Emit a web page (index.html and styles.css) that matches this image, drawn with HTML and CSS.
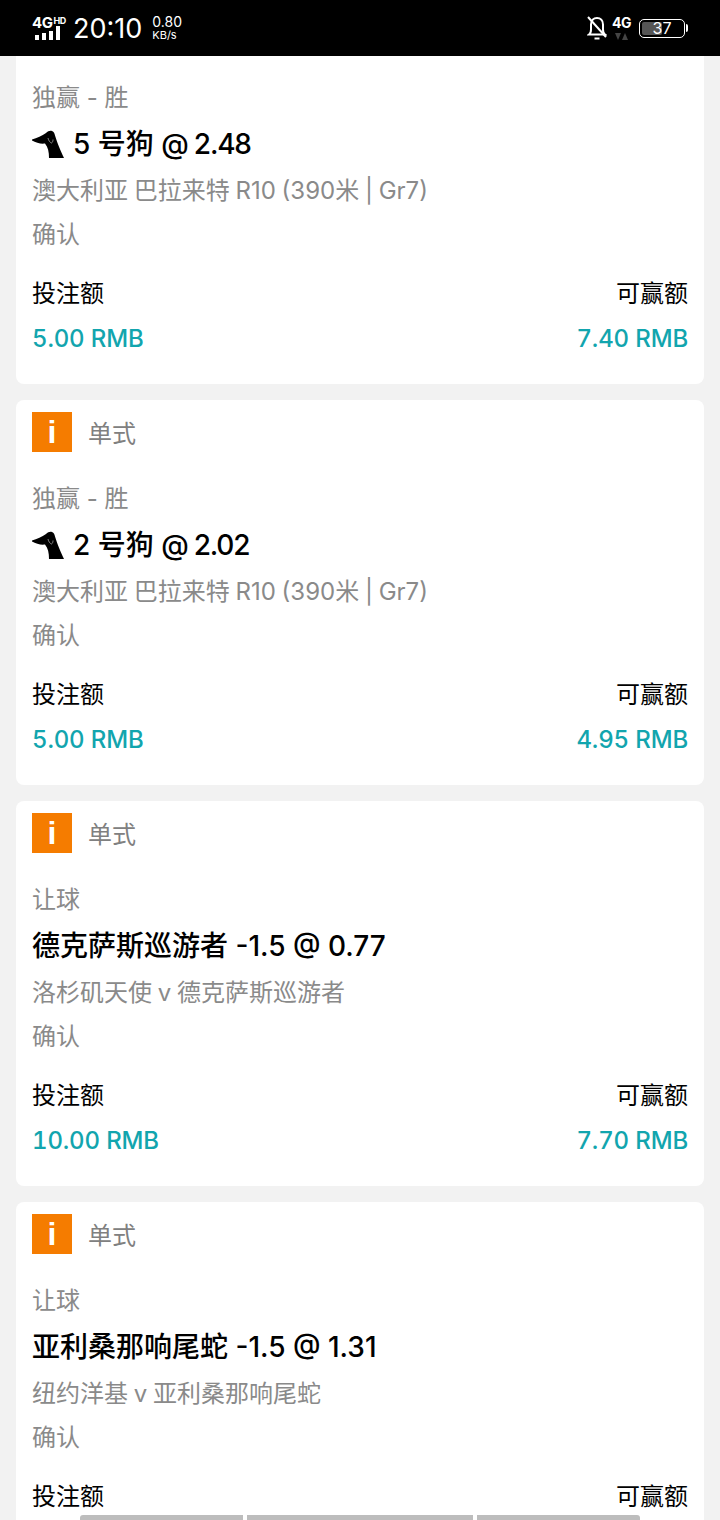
FILE: index.html
```html
<!DOCTYPE html>
<html lang="zh-CN">
<head>
  <meta charset="UTF-8" />
  <title>单式</title>
  <link rel="stylesheet" href="styles.css">
</head>
<body>

  <header class="status-bar">
    <div class="status-left">
      <div class="signal">
        <div class="signal-text">4G<sup>HD</sup></div>
        <div class="signal-bars"><i class="b1"></i><i class="b2"></i><i class="b3"></i><i class="b4"></i></div>
      </div>
      <span class="clock">20:10</span>
      <div class="speed"><span>0.80</span><span class="speed-unit">KB/s</span></div>
    </div>
    <div class="status-right">
      <svg class="bell" width="20" height="24" viewBox="0 0 20 24" fill="none" stroke="#fff" stroke-width="2">
        <path d="M2 18.500c1.500-1 2-2.500 2-5V8.500C4 4.500 6.500 2 10 2s6 2.500 6 6.500v5c0 2.500.5 4 2 5z" />
        <path d="M7.500 22.500h5" />
        <path d="M1 1l18 20" />
      </svg>
      <div class="net">
        <span class="net-text">4G</span>
        <span class="net-arrows"><i class="down"></i><i class="up"></i></span>
      </div>
      <div class="battery">
        <div class="battery-body"><div class="battery-fill"></div><span class="battery-num">37</span></div>
        <div class="battery-cap"></div>
      </div>
    </div>
  </header>

  <main class="list">

    <section class="card card-cut">
      <p class="market">独赢 - 胜</p>
      <h2 class="pick"><svg class="dog" viewBox="0 0 32 28"><use href="#dog-shape" /></svg><span>5 号狗 <span class="odds">@ 2.48</span></span></h2>
      <p class="event">澳大利亚 巴拉来特 R10 (390米 | Gr7)</p>
      <p class="state">确认</p>
      <div class="money">
        <div class="money-col"><span class="money-label">投注额</span><span class="money-value">5.00 RMB</span></div>
        <div class="money-col right"><span class="money-label">可赢额</span><span class="money-value">7.40 RMB</span></div>
      </div>
    </section>

    <section class="card">
      <div class="card-head"><span class="info-badge">i</span><span class="bet-type">单式</span></div>
      <p class="market">独赢 - 胜</p>
      <h2 class="pick"><svg class="dog" viewBox="0 0 32 28"><use href="#dog-shape" /></svg><span>2 号狗 <span class="odds">@ 2.02</span></span></h2>
      <p class="event">澳大利亚 巴拉来特 R10 (390米 | Gr7)</p>
      <p class="state">确认</p>
      <div class="money">
        <div class="money-col"><span class="money-label">投注额</span><span class="money-value">5.00 RMB</span></div>
        <div class="money-col right"><span class="money-label">可赢额</span><span class="money-value">4.95 RMB</span></div>
      </div>
    </section>

    <section class="card">
      <div class="card-head"><span class="info-badge">i</span><span class="bet-type">单式</span></div>
      <p class="market">让球</p>
      <h2 class="pick">德克萨斯巡游者 -1.5 @ 0.77</h2>
      <p class="event">洛杉矶天使 v 德克萨斯巡游者</p>
      <p class="state">确认</p>
      <div class="money">
        <div class="money-col"><span class="money-label">投注额</span><span class="money-value">10.00 RMB</span></div>
        <div class="money-col right"><span class="money-label">可赢额</span><span class="money-value">7.70 RMB</span></div>
      </div>
    </section>

    <section class="card">
      <div class="card-head"><span class="info-badge">i</span><span class="bet-type">单式</span></div>
      <p class="market">让球</p>
      <h2 class="pick">亚利桑那响尾蛇 -1.5 @ 1.31</h2>
      <p class="event">纽约洋基 v 亚利桑那响尾蛇</p>
      <p class="state">确认</p>
      <div class="money">
        <div class="money-col"><span class="money-label">投注额</span></div>
        <div class="money-col right"><span class="money-label">可赢额</span></div>
      </div>
    </section>

  </main>

  <div class="home-bar"><i class="seg1"></i><i class="seg2"></i><i class="seg3"></i></div>

  <svg width="0" height="0" class="defs">
    <symbol id="dog-shape" viewBox="0 0 32 28">
      <path fill="#000" d="M0 9.500C5 8 10 6 14 3c2-2 4-2.500 6-2 2 .5 2.500 2.500 3 4.500C25 12 29 22 32 28H17c0-6-1-11-4-14.500-4 .5-9-.5-13-3z" />
      <path fill="none" stroke="#bbb" stroke-width=".7" d="M16 8c.5 2.500 2 4.500 3.500 5 1-.5 1.500-2 1.500-3.500" />
    </symbol>
  </svg>

</body>
</html>
```

FILE: styles.css
```css
* {
  box-sizing: border-box;
}

html,
body {
  margin: 0;
  height: 1520px;
  overflow: hidden;
}

body {
  position: relative;
  font-family: Inter, "Noto Sans CJK SC", sans-serif;
  background-color: #f2f2f2;
  color: #000;
}

p,
h2 {
  margin: 0;
}

.defs {
  position: absolute;
}

/* status bar */
.status-bar {
  height: 56px;
  background-color: #000;
  color: #fff;
  display: flex;
  justify-content: space-between;
  align-items: center;
  padding: 0 32px;
}

.status-left,
.status-right {
  display: flex;
  align-items: center;
}

.signal {
  width: 34px;
  display: flex;
  flex-direction: column;
}

.signal-text {
  display: flex;
  font-size: 15px;
  font-weight: 700;
  line-height: 12px;
  letter-spacing: -0.5px;
  white-space: nowrap;
}

.signal-text sup {
  font-size: 9px;
  line-height: 8px;
  margin-left: 1px;
}

.signal-bars {
  display: flex;
  align-items: flex-end;
  gap: 3px;
  height: 14px;
  margin: -3px 0 0 3px;
}

.signal-bars i {
  display: block;
  width: 4px;
  background: #fff;
}

.b1 { height: 5px; }
.b2 { height: 7px; }
.b3 { height: 9px; }
.b4 { height: 14px; }

.clock {
  font-size: 27px;
  margin-left: 7px;
  white-space: nowrap;
}

.speed {
  display: flex;
  flex-direction: column;
  font-size: 14px;
  line-height: 14px;
  margin-left: 10px;
}

.speed-unit {
  font-size: 11px;
  line-height: 12px;
}

.bell {
  margin-right: 5px;
}

.net {
  display: flex;
  flex-direction: column;
  align-items: center;
  margin-right: 8px;
}

.net-text {
  font-size: 14px;
  font-weight: 700;
  line-height: 14px;
  letter-spacing: -0.5px;
}

.net-arrows {
  display: flex;
  gap: 1px;
  margin-top: 3px;
}

.net-arrows i {
  width: 0;
  height: 0;
  border-left: 3.500px solid transparent;
  border-right: 3.500px solid transparent;
}

.net-arrows .down {
  border-top: 7px solid #444;
}

.net-arrows .up {
  border-bottom: 7px solid #444;
}

.battery {
  display: flex;
  align-items: center;
}

.battery-body {
  position: relative;
  width: 46px;
  height: 19px;
  border: 1.500px solid #fff;
  border-radius: 5px;
  padding: 2px;
}

.battery-fill {
  width: 50%;
  height: 100%;
  background: #555;
  border-radius: 2px;
}

.battery-num {
  position: absolute;
  top: 0;
  left: 0;
  right: 0;
  text-align: center;
  font-size: 16px;
  line-height: 16px;
}

.battery-cap {
  width: 2px;
  height: 8px;
  background: #fff;
  margin-left: 1px;
  border-radius: 0 2px 2px 0;
}

/* bet cards */
.list {
  padding: 0 16px;
  display: flex;
  flex-direction: column;
  gap: 16px;
}

.card {
  background: white;
  border-radius: 8px;
  padding: 12px 16px 0;
  height: 385px;
  flex-shrink: 0;
}

.card-cut {
  height: 328px;
  padding-top: 20px;
  border-radius: 0 0 8px 8px;
}

.card-head {
  display: flex;
  align-items: center;
  height: 40px;
  margin-bottom: 25px;
}

.info-badge {
  width: 40px;
  height: 40px;
  background: #f57c00;
  color: #fff;
  font-family: "Liberation Sans", sans-serif;
  font-size: 32px;
  font-weight: 700;
  line-height: 40px;
  text-align: center;
}

.bet-type {
  margin-left: 16px;
  font-size: 24px;
  color: #808080;
  padding-bottom: 2px;
}

.market,
.event,
.state {
  font-size: 24px;
  line-height: 44px;
  color: #8a8a8a;
  white-space: nowrap;
}

.event {
  word-spacing: -1px;
}

.pick {
  display: flex;
  align-items: center;
  font-size: 28px;
  font-weight: 500;
  line-height: 48px;
  margin-bottom: 1px;
  white-space: nowrap;
}

.odds {
  letter-spacing: -1.2px;
}

.dog {
  width: 32px;
  height: 28px;
  margin-right: 9px;
}

.money {
  display: flex;
  justify-content: space-between;
  margin-top: 15px;
}

.money-col {
  display: flex;
  flex-direction: column;
}

.money-col.right {
  align-items: flex-end;
}

.money-label {
  font-size: 24px;
  line-height: 44px;
  padding-bottom: 1px;
}

.money-value {
  font-size: 24px;
  font-weight: 500;
  font-variant-numeric: tabular-nums;
  letter-spacing: -0.15px;
  line-height: 44px;
  color: #12a5ae;
}

/* bottom nav pill overlay */
.home-bar {
  position: absolute;
  left: 80px;
  bottom: 0;
  width: 560px;
  height: 5px;
  display: flex;
  gap: 4px;
}

.home-bar i {
  display: block;
  background: #bdbdbd;
}

.seg1 {
  width: 163px;
  border-radius: 3px 0 0 0;
}

.seg2 {
  width: 226px;
}

.seg3 {
  width: 163px;
  border-radius: 0 3px 0 0;
}
```
